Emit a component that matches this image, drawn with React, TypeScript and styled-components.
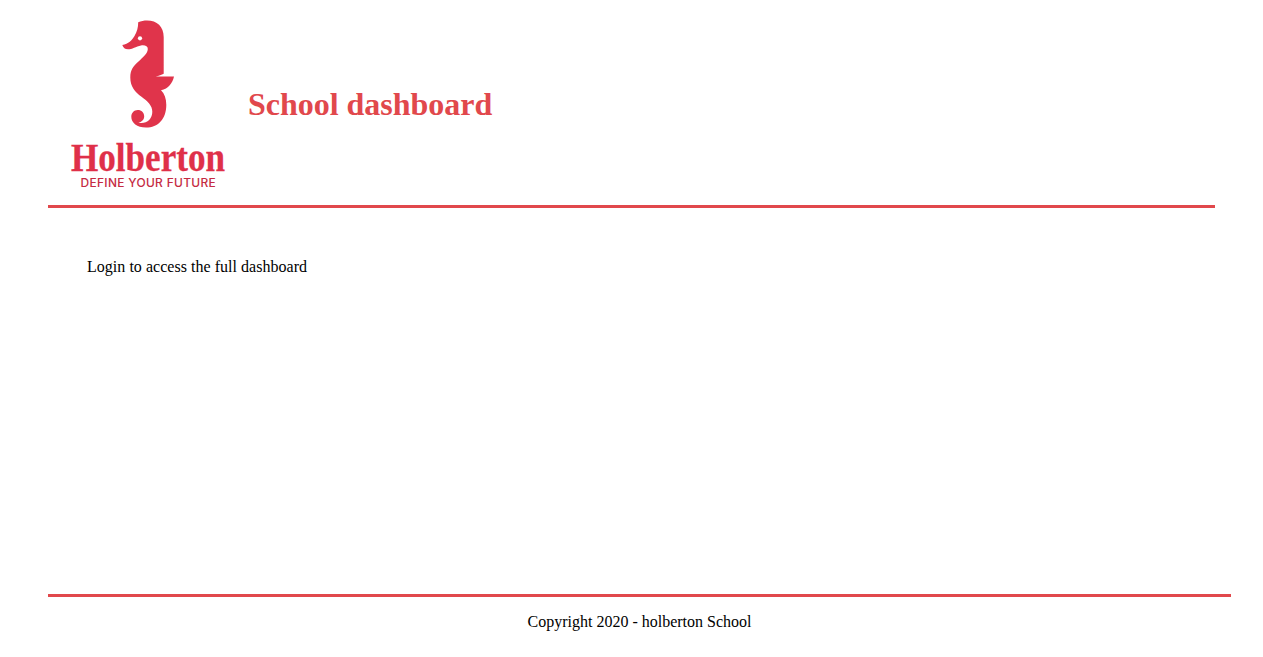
import React from "react";
import styled, { createGlobalStyle } from "styled-components";

const accent = "#e1484c";

const GlobalStyle = createGlobalStyle`
  body {
    margin: 0;
    background: #fff;
    color: #000;
    font-family: "Liberation Serif", "Times New Roman", serif;
    font-size: 16px;
  }
`;

const Page = styled.div`
  display: flex;
  flex-direction: column;
  height: 657px;
  box-sizing: border-box;
  padding: 5px 32px 0 48px;
  overflow: hidden;
`;

const Header = styled.header`
  display: flex;
  align-items: center;
  height: 200px;
  margin-right: 16px;
  border-bottom: 3px solid ${accent};
`;

const Logo = styled.svg`
  display: block;
  flex: none;
  width: 200px;
  height: 200px;
`;

const Title = styled.h1`
  margin: 0;
  padding-bottom: 2px;
  color: ${accent};
  font-size: 32px;
  font-weight: bold;
  line-height: 36px;
  letter-spacing: -0.02px;
`;

const Body = styled.main`
  flex: 1;
  padding: 50px 39px 0;
`;

const Message = styled.p`
  margin: 0;
  line-height: 18px;
  letter-spacing: 0.03px;
`;

const Footer = styled.footer`
  height: 44px;
  padding-top: 16px;
  border-top: 3px solid ${accent};
  text-align: center;
  line-height: 18px;
`;

function HolbertonLogo() {
  return (
    <Logo viewBox="48 5 200 200" role="img" aria-label="Holberton">
      <path
        fill="#e0344b"
        d="M138.2 22.3C141 21 144 20.5 147 20.5C157 20.5 163.7 26.5 163.7 37V73.7C161.5 74.7 159 75.8 155.5 76.5H174C172.5 83 168.5 89 161 90.2C164.5 93.5 166.3 98.5 166.3 105C166.3 119 158 127.6 146 127.6C137 127.6 131.3 122.8 131.3 116.8C131.3 112.8 134 110 137.8 110C141.5 110 144.2 112.7 144.2 116.2C144.2 119.7 141.6 122 138.2 122.7C146 124.6 152.3 119.5 152.3 111.8C152.3 105.5 147.5 101.2 141.5 96.8C135 92 130.3 86.5 130.3 77.5C130.3 70 133 66.5 138.5 61.5C143 57.3 147.8 53.2 147.8 49C147.8 46 145 44.8 141 45.4C136 46.3 132 49.3 128 49.3C125 49.3 123.2 47.7 122.3 45C128.5 43.8 132 40.3 134.5 36C137 31.8 138.2 27.5 138.2 22.3Z"
      />
      <circle cx="140" cy="38.3" r="2.1" fill="#fff" />
      <text
        x="71"
        y="171"
        textLength="154"
        lengthAdjust="spacingAndGlyphs"
        fill="#df3049"
        stroke="#df3049"
        strokeWidth="0.3"
        fontFamily="Liberation Serif, serif"
        fontWeight="bold"
        fontSize="39"
      >
        Holberton
      </text>
      <text
        x="80.5"
        y="187.2"
        textLength="135.5"
        lengthAdjust="spacingAndGlyphs"
        fill="#c52b43"
        fontFamily="Inter, sans-serif"
        fontWeight="500"
        fontSize="11.4"
        letterSpacing="0.3"
      >
        DEFINE YOUR FUTURE
      </text>
    </Logo>
  );
}

export default function App() {
  return (
    <>
      <GlobalStyle />
      <Page>
        <Header>
          <HolbertonLogo />
          <Title>School dashboard</Title>
        </Header>
        <Body>
          <Message>Login to access the full dashboard</Message>
        </Body>
        <Footer>Copyright 2020 - holberton School</Footer>
      </Page>
    </>
  );
}
